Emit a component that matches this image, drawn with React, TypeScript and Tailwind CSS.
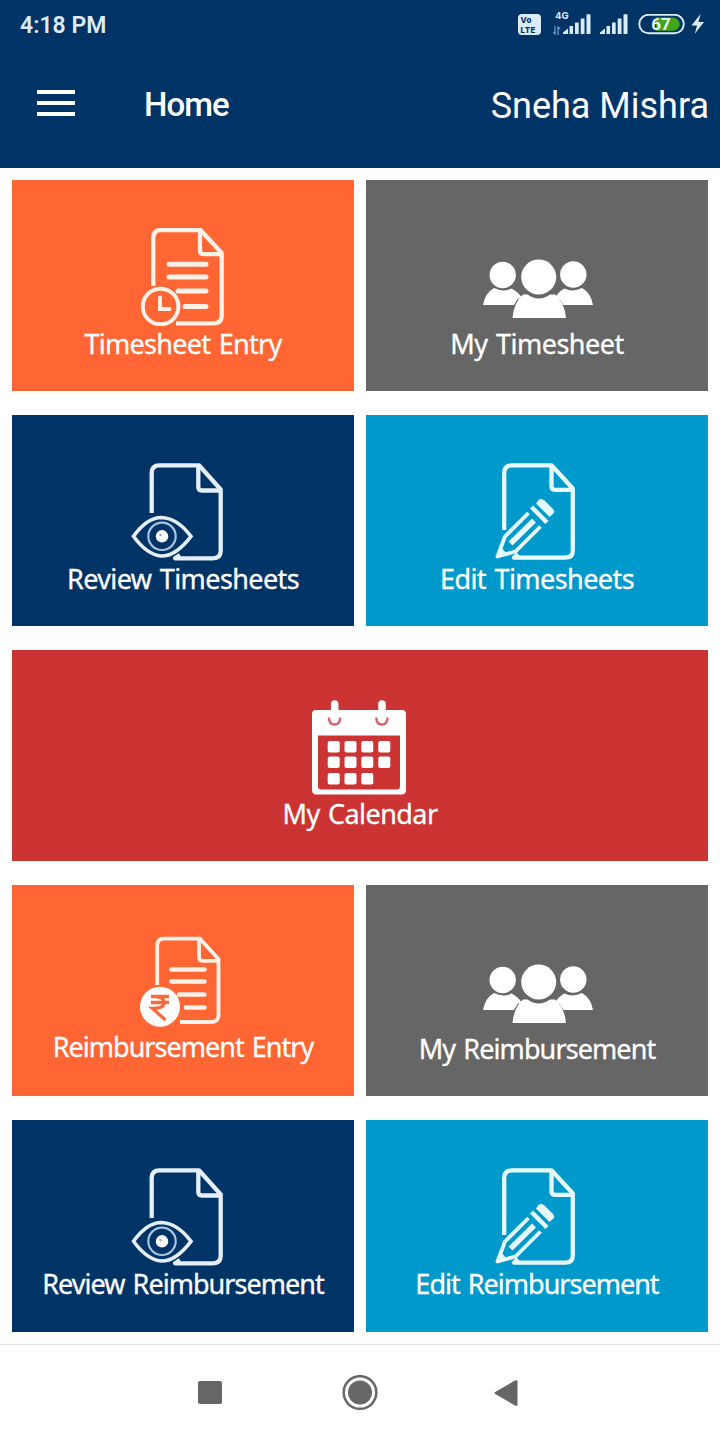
import type { ReactNode } from "react";

const LABEL_FONT = "font-['Noto_Sans',sans-serif]";

function Sheet({ d, fold }: { d: string; fold: string }) {
  return (
    <g fill="none" stroke="currentColor" strokeWidth="4.300" strokeLinejoin="round">
      <path d={d} />
      <path d={fold} />
    </g>
  );
}

function TimesheetIcon() {
  return (
    <svg viewBox="123 228 120 98" className="h-[98px] w-[120px] text-[#fff0e8]">
      <Sheet
        d="M153.3 286V238Q153.3 230 161 230H200.500L221.700 253V316Q221.700 323.300 214 323.300H176"
        fold="M200 231V250.500Q200 254.200 203.500 254.200H221"
      />
      <g fill="none" stroke="currentColor" strokeWidth="5" strokeLinecap="round">
        <path d="M169 264.300H206M169 277H206M178 291H206M185 306.500H206" />
        <circle cx="160.600" cy="306.500" r="17.800" strokeWidth="4" />
        <path d="M160 297.500V309H169.500" strokeWidth="4" />
      </g>
    </svg>
  );
}

function PeopleIcon() {
  return (
    <svg viewBox="477 228 120 98" className="h-[98px] w-[120px]" fill="#fff">
      <circle cx="502.700" cy="275" r="13.200" />
      <circle cx="573.300" cy="274.500" r="13.200" />
      <circle cx="538.700" cy="277" r="17.500" />
      <path d="M483 305Q485 293 494 288Q503 292.500 511.500 288.500Q517 291 521.500 297L517.500 299L514 305Z" />
      <path d="M593 305Q591 293 582 288Q573 292.500 564.500 288.500Q559 291 555.500 297L559.500 299L563.500 305Z" />
      <path d="M512.500 318Q514 302 523 294.500H527.500Q538.700 302.500 550 294.500H555Q564.500 302 566 318Z" />
    </svg>
  );
}

function ReviewIcon() {
  return (
    <svg viewBox="123 463 120 98" className="h-[98px] w-[120px] text-[#e6eff9]">
      <Sheet
        d="M151.700 513V473Q151.700 465.300 159.500 465.300H199L220.700 489.500V551Q220.700 558.300 213 558.300H175L180 555"
        fold="M198.300 466V487Q198.300 490.500 202 490.500H220"
      />
      <path d="M133.500 536.300Q147 517.500 161.500 517.500Q177 518 191 536.300Q176 556 161.500 556Q147 555 133.500 536.300Z" fill="none" stroke="currentColor" strokeWidth="3.600" />
      <circle cx="162" cy="536.300" r="13.700" fill="none" stroke="#a9c4de" strokeWidth="2.200" />
      <circle cx="162" cy="536.300" r="6.200" fill="#fff" />
      <circle cx="160.500" cy="535" r="1.300" fill="#9bb0c6" />
    </svg>
  );
}

function EditIcon() {
  return (
    <svg viewBox="477 463 120 98" className="h-[98px] w-[120px] text-[#e6fafe]">
      <Sheet
        d="M504.200 530V473Q504.200 465.300 512 465.300H551.500L572.800 488.500V550.500Q572.800 557.700 565 557.700H514L518 554"
        fold="M551.500 466V486Q551.500 489.800 555 489.800H572"
      />
      <g fill="none" stroke="currentColor" strokeWidth="3.800" strokeLinejoin="round">
        <path d="M528.500 513L505 536.500L497.500 556.500L515.500 551.500L540.500 526.500" />
        <path d="M531.500 507L547 522.500" strokeWidth="4.500" />
        <path d="M534 520.500L510.500 543.500" strokeWidth="5.500" />
      </g>
      <path d="M539 499.500Q542 498 544.500 500.500L553 509Q555 511 553.500 513.500L549.500 517L536 503.500Z" fill="currentColor" />
      <path d="M496 558L500 546L507 554Z" fill="currentColor" />
    </svg>
  );
}

function CalendarIcon() {
  return (
    <svg viewBox="300 698 120 98" className="h-[98px] w-[120px]">
      <path fillRule="evenodd" fill="#fff" d="M316 710H402Q406 710 406 714V790Q406 794.500 401.500 794.500H316.500Q312 794.500 312 790V714Q312 710 316 710ZM318 735.500V786Q318 789.500 321 789.500H397Q400 789.500 400 786V735.500Z" />
      <g fill="none" stroke="#d8636a" strokeWidth="2.400">
        <path d="M329 717.500Q329 724.500 334.500 724.500Q340.200 724.500 340.200 717.500M376.300 717.500Q376.300 724.500 382 724.500Q387.500 724.500 387.500 717.500" />
      </g>
      <path d="M334.700 704V717M382 704V717" stroke="#fff" strokeWidth="7.500" strokeLinecap="round" />
      {[746.7, 762.3, 778.7].map((y, row) =>
        [333.7, 350.5, 367.3, 384.3]
          .slice(0, row === 2 ? 3 : 4)
          .map((x) => <rect key={`${x}-${y}`} x={x - 6} y={y - 5.8} width="12" height="11.600" rx="2" fill="#fff" />),
      )}
    </svg>
  );
}

function RupeeIcon() {
  return (
    <svg viewBox="123 933 120 96" className="h-[96px] w-[120px] text-[#fff0e8]">
      <g fill="none" stroke="currentColor" strokeWidth="3.800" strokeLinejoin="round">
        <path d="M157.200 985V946Q157.200 938.700 164 938.700H200L218.500 959V1015Q218.500 1022 211 1022H180" />
        <path d="M199 939.500V957Q199 960.800 202.500 960.800H218" />
        <path d="M171.500 969.500H204.500M171.500 981.500H204.500M179 994.500H204.500M186 1007.500H204.500" strokeWidth="4.600" strokeLinecap="round" />
      </g>
      <circle cx="160" cy="1006.700" r="20" fill="#fff" />
      <path d="M151 996.500H169M151 1002.500H169M151 996.500H156Q164 997 164 1002.500Q164 1008.500 152.500 1008.500L165.500 1020" fill="none" stroke="#f66b3b" strokeWidth="3.300" />
    </svg>
  );
}

function Tile({ label, color, tracking, wide, tall, children }: { label: string; color: string; tracking: string; wide?: boolean; tall?: boolean; children: ReactNode }) {
  return (
    <button className={`flex flex-col items-center pt-12 text-white ${tall ? "h-[212px]" : "h-[211px]"} ${color} ${wide ? "col-span-2" : ""}`}>
      {children}
      <span className={`${LABEL_FONT} whitespace-nowrap text-[27px] leading-9 [word-spacing:2px] [-webkit-text-stroke:0.3px_white] ${tracking}`}>{label}</span>
    </button>
  );
}

function SignalBars() {
  return (
    <svg viewBox="0 0 28 20" className="h-5 w-7" fill="#dcebfa">
      <path d="M0 20V18.500L5 14.500V20Z" />
      <rect x="6.500" y="12" width="3.600" height="8" rx="0.500" />
      <rect x="12" y="8.500" width="3.700" height="11.500" rx="0.500" />
      <rect x="17.700" y="4.500" width="3.800" height="15.500" rx="0.500" />
      <rect x="23.500" y="0.300" width="4" height="19.700" rx="0.500" />
    </svg>
  );
}

function StatusBar() {
  return (
    <div className="flex h-12 items-start pl-5 pr-[15px] font-['Roboto',sans-serif] text-[#dcebfa]">
      <span className="mt-[10px] text-[23px] font-semibold leading-8 tracking-[0px]">4:18 PM</span>
      <div className="ml-auto flex pt-[14px]">
        <div className="flex h-[21px] w-[23px] flex-col items-center justify-center rounded-[4px] bg-[#dcebfa] font-['Inter',sans-serif] text-[8px] font-extrabold leading-[10px] tracking-[0.400px] text-[#003366]">
          <span className="w-[18px] text-left">Vo</span>
          <span className="w-[18px] text-left">LTE</span>
        </div>
        <div className="relative ml-[12px] flex w-[38px] justify-end">
          <span className="absolute -top-[3px] left-[2px] font-['Inter',sans-serif] text-[9.500px] font-bold leading-[10px]">4G</span>
          <svg viewBox="0 0 8 9" className="absolute left-0 top-[12px] h-[9px] w-2" fill="none" stroke="#7f9fbd" strokeWidth="1.200">
            <path d="M2 0V8L0.300 6M5 9V1L7 3" />
          </svg>
          <SignalBars />
        </div>
        <div className="ml-[9px]"><SignalBars /></div>
        <svg viewBox="638 14 47 21" className="ml-[10px] h-[21px] w-[47px]">
          <rect x="639.300" y="14.800" width="44.500" height="18.500" rx="9.250" fill="none" stroke="#dcebfa" strokeWidth="1.900" />
          <path d="M656 17.500H673A6.600 6.600 0 0 1 673 30.800H656Z" fill="#43a51c" />
          <text x="661" y="30.200" textAnchor="middle" fontFamily="Roboto, sans-serif" fontSize="17" fontWeight="700" fill="#eaf7f5">67</text>
        </svg>
        <svg viewBox="691 14 14 20" className="ml-[6px] h-5 w-[14px]" fill="#dcebfa">
          <path d="M700.500 14L691.500 25.500H697L694.800 33.800L704 22H698.500Z" />
        </svg>
      </div>
    </div>
  );
}

export default function App() {
  return (
    <div className="flex h-[1440px] w-[720px] flex-col overflow-hidden bg-white">
      <header className="h-[168px] bg-[#003366] font-['Roboto',sans-serif] text-white">
        <StatusBar />
        <div className="flex h-[112px] items-center pl-[37px] pr-[11px]">
          <button className="-mt-[2px] flex h-[26px] w-[38px] flex-col justify-between" aria-label="Menu">
            <span className="h-1 w-full bg-white" />
            <span className="h-1 w-full bg-white" />
            <span className="h-1 w-full bg-white" />
          </button>
          <h1 className="ml-[69px] mt-[2px] text-[33px] font-medium leading-10 tracking-[-1px]">Home</h1>
          <span className="ml-auto mt-[3px] text-[36px] leading-10">Sneha Mishra</span>
        </div>
      </header>
      <main className="grid h-[1176px] grid-cols-2 content-start gap-x-3 gap-y-6 px-3 pt-3">
        <Tile label="Timesheet Entry" color="bg-[#ff6633]" tracking="tracking-[-0.700px]"><TimesheetIcon /></Tile>
        <Tile label="My Timesheet" color="bg-[#666666]" tracking="tracking-[-0.520px]"><PeopleIcon /></Tile>
        <Tile label="Review Timesheets" color="bg-[#003366]" tracking="tracking-[-0.600px]"><ReviewIcon /></Tile>
        <Tile label="Edit Timesheets" color="bg-[#0099cc]" tracking="tracking-[-0.570px]"><EditIcon /></Tile>
        <Tile label="My Calendar" color="bg-[#cc3333]" tracking="tracking-[-0.570px]" wide><CalendarIcon /></Tile>
        <Tile label="Reimbursement Entry" color="bg-[#ff6633]" tracking="tracking-[-0.970px]"><RupeeIcon /></Tile>
        <Tile label="My Reimbursement" color="bg-[#666666]" tracking="tracking-[-0.900px]"><PeopleIcon /></Tile>
        <Tile label="Review Reimbursement" color="bg-[#003366]" tracking="tracking-[-0.970px]" tall><ReviewIcon /></Tile>
        <Tile label="Edit Reimbursement" color="bg-[#0099cc]" tracking="tracking-[-0.990px]" tall><EditIcon /></Tile>
      </main>
      <nav className="flex h-24 items-center border-t border-[#dedede] pl-[198px] text-[#666666]">
        <span className="h-[23px] w-6 rounded-[2px] bg-[#666666]" />
        <svg viewBox="0 0 36 36" className="ml-[119.500px] h-9 w-9" fill="currentColor">
          <circle cx="18" cy="17.500" r="16.300" fill="none" stroke="currentColor" strokeWidth="2.500" />
          <circle cx="18" cy="17.500" r="12" />
        </svg>
        <svg viewBox="0 0 24 26" className="ml-[116px] h-[26px] w-6" fill="currentColor">
          <path d="M1.200 12Q0 13 1.200 14L21.500 25.700Q23.500 26.300 23.500 24.500V1.500Q23.500 -0.300 21.500 0.300Z" />
        </svg>
      </nav>
    </div>
  );
}
